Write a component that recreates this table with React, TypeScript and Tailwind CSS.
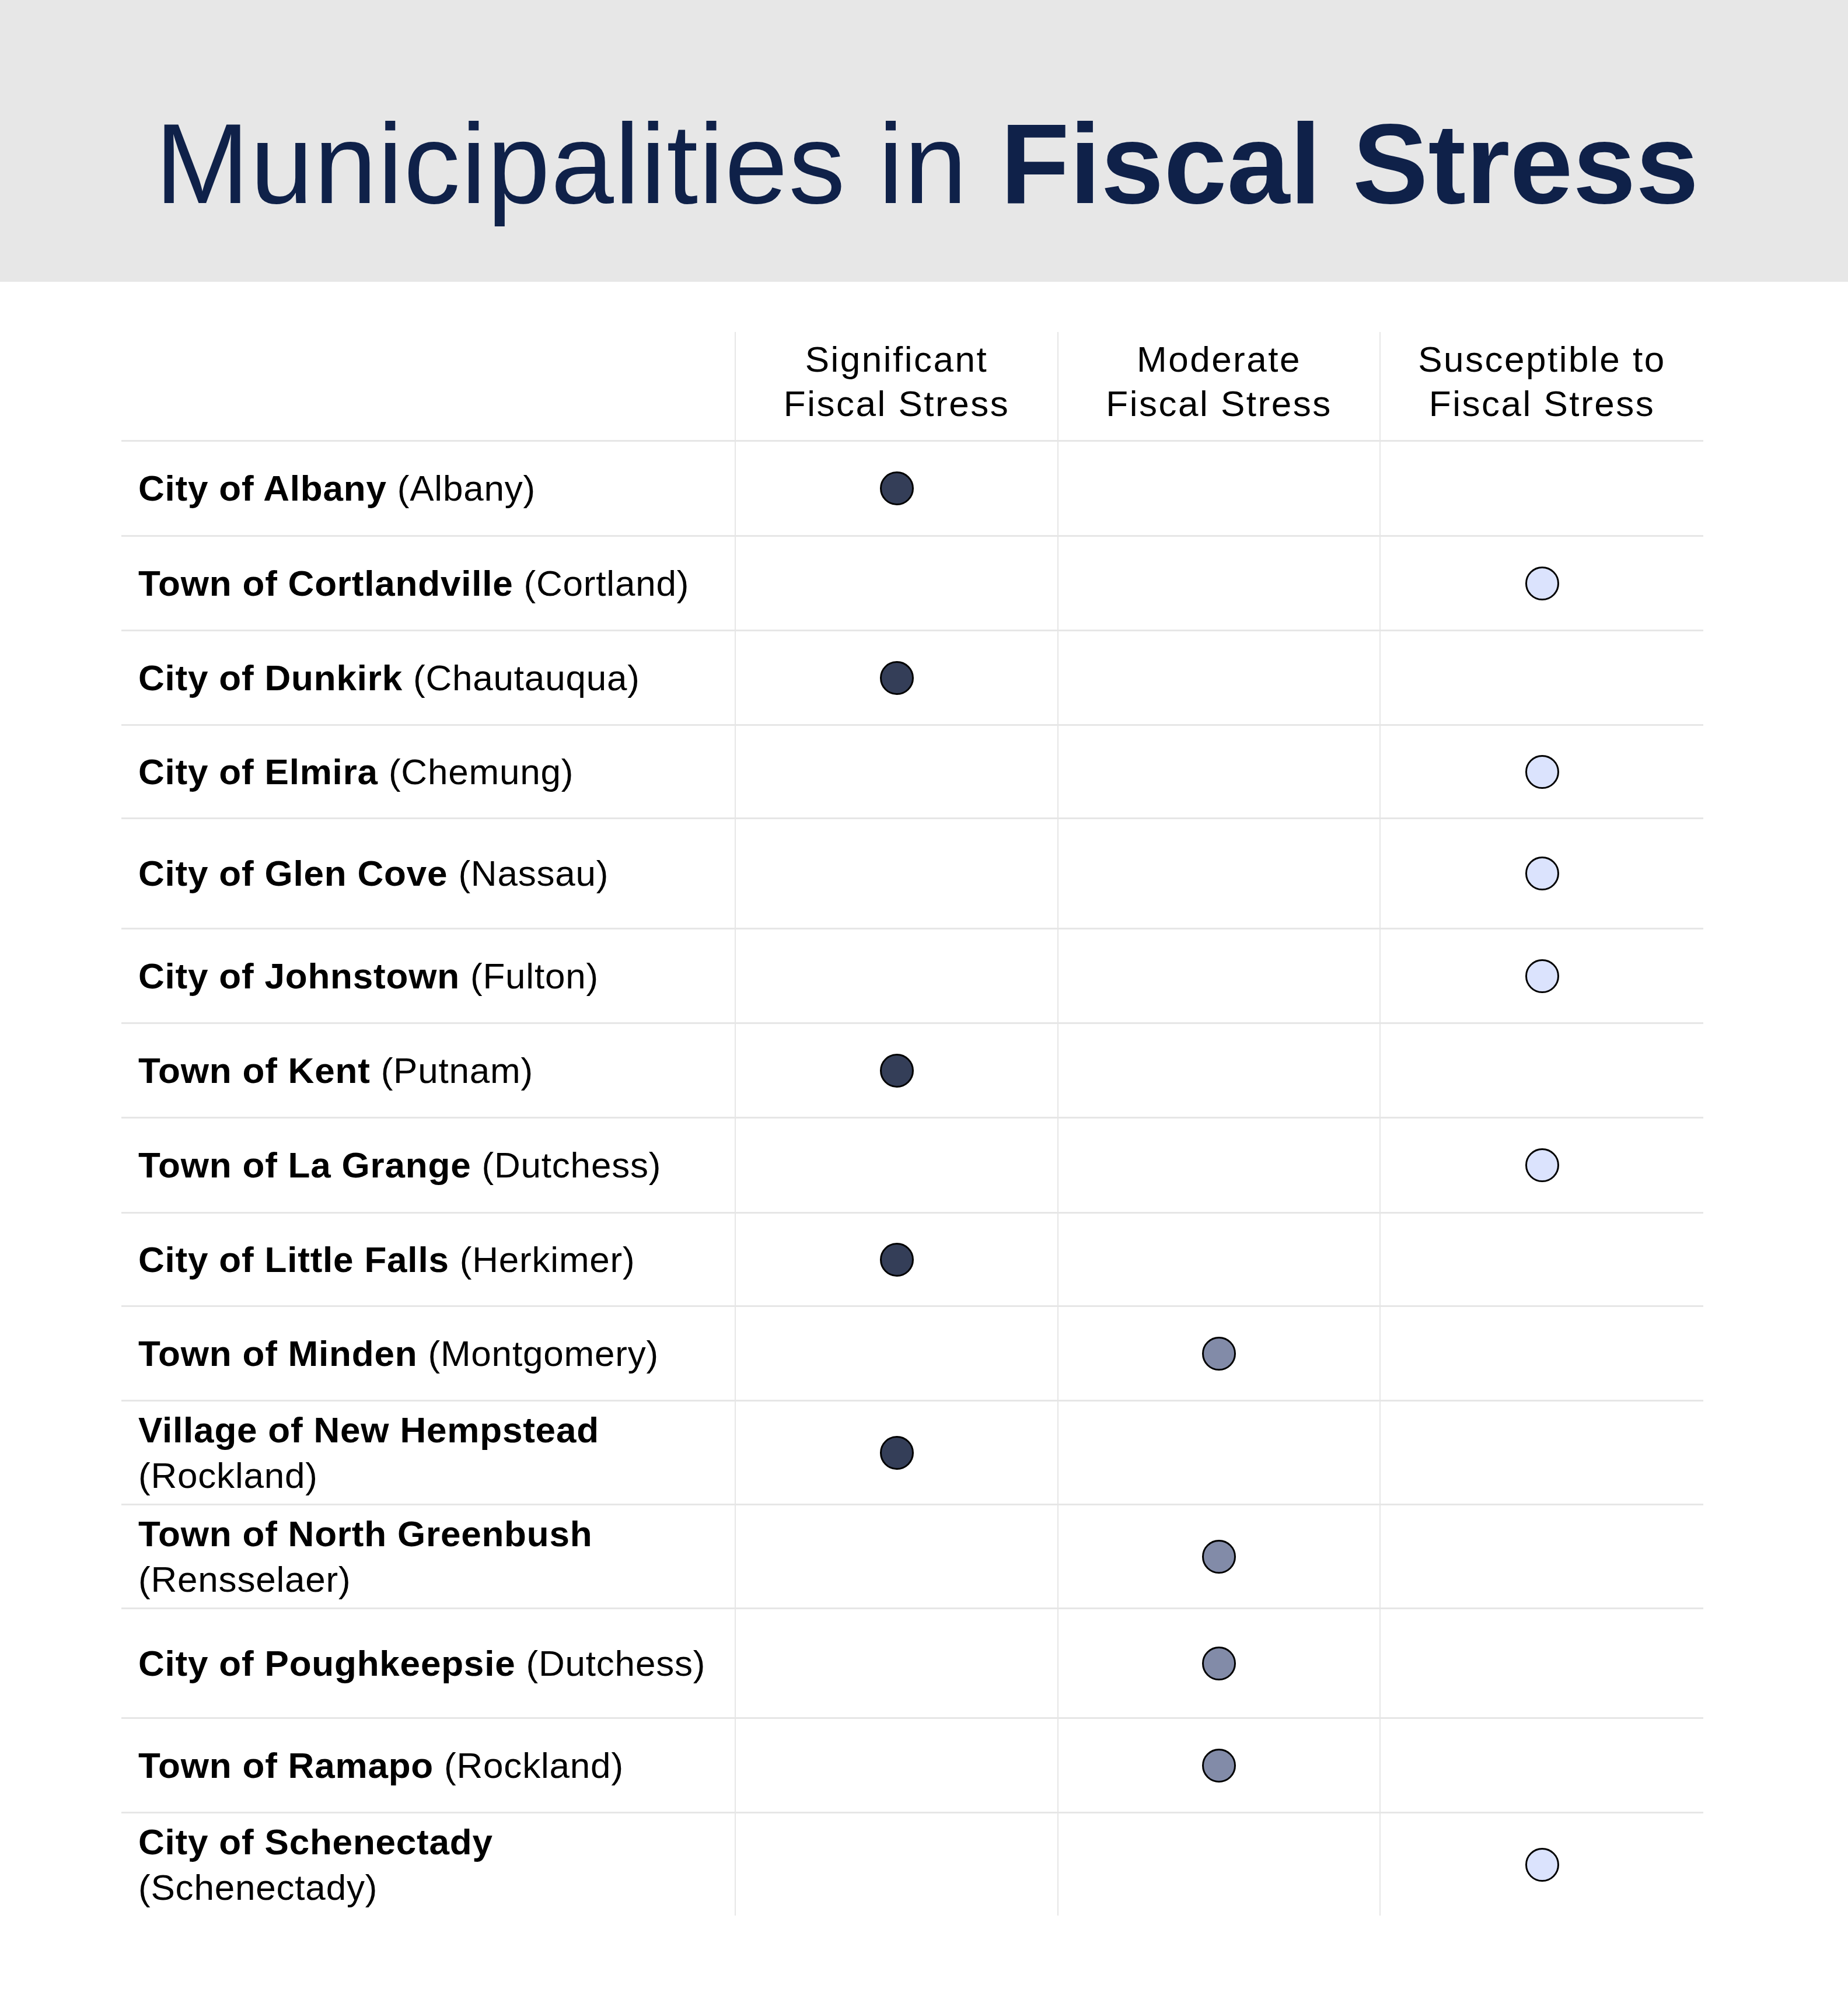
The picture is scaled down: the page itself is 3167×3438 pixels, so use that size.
const rows = [
  { name: "City of Albany", county: "Albany", level: 1, h: "h-[163px]" },
  { name: "Town of Cortlandville", county: "Cortland", level: 3, h: "h-[162px]" },
  { name: "City of Dunkirk", county: "Chautauqua", level: 1, h: "h-[162px]" },
  { name: "City of Elmira", county: "Chemung", level: 3, h: "h-[160px]" },
  { name: "City of Glen Cove", county: "Nassau", level: 3, h: "h-[189px]" },
  { name: "City of Johnstown", county: "Fulton", level: 3, h: "h-[162px]" },
  { name: "Town of Kent", county: "Putnam", level: 1, h: "h-[162px]" },
  { name: "Town of La Grange", county: "Dutchess", level: 3, h: "h-[163px]" },
  { name: "City of Little Falls", county: "Herkimer", level: 1, h: "h-[160px]" },
  { name: "Town of Minden", county: "Montgomery", level: 2, h: "h-[162px]" },
  { name: "Village of New Hempstead", county: "Rockland", level: 1, h: "h-[178px]", wrap: true },
  { name: "Town of North Greenbush", county: "Rensselaer", level: 2, h: "h-[178px]", wrap: true },
  { name: "City of Poughkeepsie", county: "Dutchess", level: 2, h: "h-[188px]" },
  { name: "Town of Ramapo", county: "Rockland", level: 2, h: "h-[162px]" },
  { name: "City of Schenectady", county: "Schenectady", level: 3, h: "h-[178px]", wrap: true },
];

const dotColors: Record<number, string> = {
  1: "bg-[#343e58]",
  2: "bg-[#828ba8]",
  3: "bg-[#dbe3fd]",
};

const headers = [
  ["Significant", "Fiscal Stress"],
  ["Moderate", "Fiscal Stress"],
  ["Susceptible to", "Fiscal Stress"],
];

function Dot({ level }: { level: number }) {
  return <span className={`block size-[58px] rounded-full border-[3px] border-black ${dotColors[level]}`} />;
}

export default function App() {
  return (
    <div className="min-h-[3438px] w-[3167px] bg-white font-['Liberation_Sans',Arial,sans-serif] text-black">
      <header className="h-[483px] bg-[#e7e7e7] pl-[10px] pt-[184px] text-center text-[194px] leading-none text-[#0f2149]">
        <span className="tracking-[1.4px]">Municipalities in </span>
        <span className="font-bold">Fiscal Stress</span>
      </header>

      <div className="ml-[208px] w-[2711px] pt-[86px]">
        <div className="grid h-[185px] grid-cols-[1051px_553px_552px_555px]">
          <div />
          {headers.map(([a, b]) => (
            <div
              key={a}
              className="flex items-center justify-center border-l-2 border-[#e6e6e6] pb-[16px] text-center text-[62px] leading-[76px] tracking-[2.5px]"
            >
              <div>
                {a}
                <br />
                {b}
              </div>
            </div>
          ))}
        </div>

        {rows.map((row) => (
          <div
            key={row.name}
            className={`grid grid-cols-[1051px_553px_552px_555px] border-t-[3px] border-[#e6e6e6] ${row.h}`}
          >
            <div className="flex items-center pl-[29px] pr-[10px] text-[62px] leading-[78px] tracking-[0.8px]">
              <div>
                <span className="font-bold">{row.name}</span>
                {row.wrap ? <br /> : " "}
                ({row.county})
              </div>
            </div>
            {[1, 2, 3].map((col) => (
              <div key={col} className="flex items-center justify-center border-l-2 border-[#e6e6e6]">
                {row.level === col ? <Dot level={row.level} /> : null}
              </div>
            ))}
          </div>
        ))}
      </div>
    </div>
  );
}
